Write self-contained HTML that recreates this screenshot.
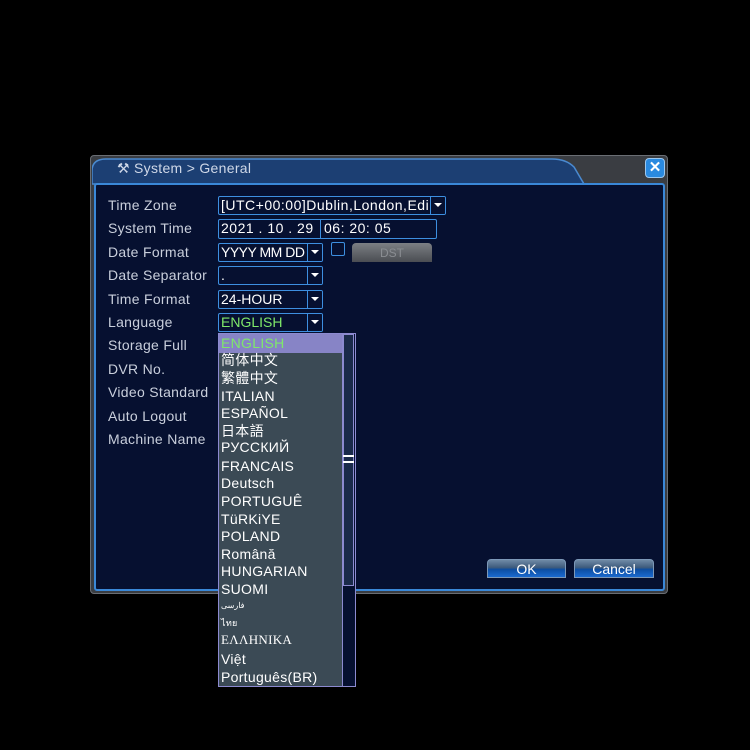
<!DOCTYPE html>
<html><head><meta charset="utf-8"><style>
*{margin:0;padding:0;box-sizing:border-box}
body{width:750px;height:750px;background:#000;position:relative;overflow:hidden;font-family:"Liberation Sans","Noto Sans CJK SC",sans-serif;color:#d8dde8}
.a{position:absolute}
.lbl{position:absolute;left:108px;font-size:14px;color:#c9cfdc;line-height:16px;letter-spacing:0.3px}
.box{position:absolute;border:1.5px solid #3d8fe0;border-radius:2px;background:#061030;font-size:14px;color:#fff;line-height:17px;padding-left:2px;white-space:nowrap;overflow:hidden}
.arr{position:absolute;top:0;right:0;width:15px;height:100%;border-left:1.5px solid #3d8fe0;background:#061030}
.arr:after{content:"";position:absolute;left:3px;top:6px;border-left:4px solid transparent;border-right:4px solid transparent;border-top:4px solid #fff}
.it{position:absolute;left:221px;font-size:14px;color:#fff;line-height:16px;white-space:nowrap;letter-spacing:0.3px}
.btn{position:absolute;height:19px;border-radius:4px 4px 0 0;background:linear-gradient(#6f8aa6 0,#3d5a7c 45%,#0d4da0 55%,#1a6ad0 100%);color:#fff;font-size:14px;text-align:center;line-height:18px;border:1px solid #7c98b8}
</style></head><body>
<div class="a" style="left:90px;top:155px;width:578px;height:439px;background:#3a3d42;border:1px solid #6a6e74;border-radius:4px"></div>
<svg class="a" style="left:92px;top:157px" width="500" height="28"><path d="M0 27 L0 14 Q0 2 14 2 L460 2 Q474 2 482 10 L492 27 Z" fill="#1c3f73" stroke="#4a8ad0" stroke-width="1.5"/></svg>
<div class="a" style="left:117px;top:160px;font-size:14px;color:#cfd8e8;letter-spacing:0.3px">⚒ System &gt; General</div>
<div class="a" style="left:645px;top:158px;width:20px;height:20px;border-radius:4px;background:#2a8ae0;border:1px solid #9cc8f0;color:#fff;font-weight:bold;font-size:15px;text-align:center;line-height:18px">✕</div>
<div class="a" style="left:94px;top:183px;width:571px;height:408px;background:#061030;border:2.5px solid #3a88d8;border-radius:3px"></div>

<div class="lbl" style="top:197px">Time Zone</div>
<div class="lbl" style="top:220px">System Time</div>
<div class="lbl" style="top:244px">Date Format</div>
<div class="lbl" style="top:267px">Date Separator</div>
<div class="lbl" style="top:291px">Time Format</div>
<div class="lbl" style="top:314px">Language</div>
<div class="lbl" style="top:337px">Storage Full</div>
<div class="lbl" style="top:361px">DVR No.</div>
<div class="lbl" style="top:384px">Video Standard</div>
<div class="lbl" style="top:408px">Auto Logout</div>
<div class="lbl" style="top:431px">Machine Name</div>

<div class="box" style="left:218px;top:196px;width:228px;height:19px;letter-spacing:0.5px">[UTC+00:00]Dublin,London,Edi<div class="arr"></div></div>
<div class="box" style="left:218px;top:219px;width:219px;height:20px;letter-spacing:0.5px">2021 . 10 . 29<span style="position:absolute;left:101px;top:0;height:100%;border-left:1.5px solid #3d8fe0;padding-left:3px">06: 20: 05</span></div>
<div class="box" style="left:218px;top:243px;width:105px;height:19px;letter-spacing:-0.5px">YYYY MM DD<div class="arr"></div></div>
<div class="a" style="left:331px;top:242px;width:14px;height:14px;border:1.5px solid #3d8fe0;border-radius:2px"></div>
<div class="a" style="left:352px;top:243px;width:80px;height:19px;border-radius:4px 4px 0 0;background:linear-gradient(#7c7f84,#4a4d52);color:#8a8d92;font-size:12px;text-align:center;line-height:20px">DST</div>
<div class="box" style="left:218px;top:266px;width:105px;height:19px">.<div class="arr"></div></div>
<div class="box" style="left:218px;top:290px;width:105px;height:19px">24-HOUR<div class="arr"></div></div>
<div class="box" style="left:218px;top:313px;width:105px;height:19px;color:#7fe86a">ENGLISH<div class="arr"></div></div>

<div class="btn" style="left:487px;top:559px;width:79px">OK</div>
<div class="btn" style="left:574px;top:559px;width:80px">Cancel</div>

<div class="a" style="left:218px;top:333px;width:138px;height:354px;background:#3b4a55;border:1.5px solid #8c8ad0"></div>
<div class="a" style="left:219px;top:334px;width:124px;height:19px;background:#8784c6"></div>
<div class="a" style="left:342px;top:334px;width:13px;height:352px;background:#061030;border-left:1.5px solid #8c8ad0"></div>
<div class="a" style="left:343px;top:334px;width:11px;height:252px;background:#1a2a4a;border:1px solid #8c8ad0"></div>
<div class="a" style="left:343px;top:455px;width:11px;height:8px;border-top:2px solid #fff;border-bottom:2px solid #fff"></div>
<div class="it" style="top:335px;color:#7fe86a">ENGLISH</div>
<div class="it" style="top:352px">简体中文</div>
<div class="it" style="top:370px">繁體中文</div>
<div class="it" style="top:388px">ITALIAN</div>
<div class="it" style="top:405px">ESPAÑOL</div>
<div class="it" style="top:423px">日本語</div>
<div class="it" style="top:439px">РУССКИЙ</div>
<div class="it" style="top:458px">FRANCAIS</div>
<div class="it" style="top:475px">Deutsch</div>
<div class="it" style="top:493px">PORTUGUÊ</div>
<div class="it" style="top:511px">TüRKiYE</div>
<div class="it" style="top:528px">POLAND</div>
<div class="it" style="top:546px">Română</div>
<div class="it" style="top:563px">HUNGARIAN</div>
<div class="it" style="top:581px">SUOMI</div>
<div class="it" style="top:598px;font-size:8px">فارسی</div>
<div class="it" style="top:615px;font-size:9px">ไทย</div>
<div class="it" style="top:632px;font-family:'Liberation Serif',serif;font-size:13px">ΕΛΛΗΝΙΚΑ</div>
<div class="it" style="top:651px">Việt</div>
<div class="it" style="top:669px">Português(BR)</div>
</body></html>
